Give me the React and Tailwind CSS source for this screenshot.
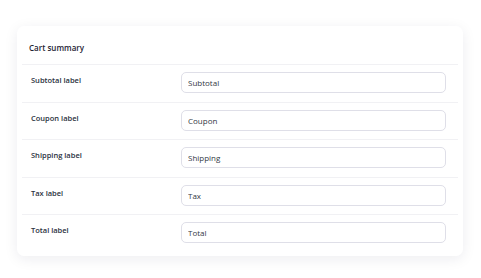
const rows = [
	{ label: 'Subtotal label', value: 'Subtotal' },
	{ label: 'Coupon label', value: 'Coupon' },
	{ label: 'Shipping label', value: 'Shipping' },
	{ label: 'Tax label', value: 'Tax' },
	{ label: 'Total label', value: 'Total' },
];

export default function App() {
	return (
		<div
			className="min-h-[278px] bg-white pt-[26px] pl-[17px]"
			style={{ fontFamily: '"Open Sans", "Noto Sans", sans-serif' }}
		>
			<div className="w-[446px] rounded-[7px] bg-white px-[5px] pb-[4px] shadow-[0_3px_14px_rgba(30,30,60,0.08)]">
				{/* Header */}
				<div className="flex h-[38px] items-center pt-[6px] pl-[7px] text-[8px] font-semibold text-[#1e2433]">
					Cart summary
				</div>

				{rows.map((row) => (
					<div
						key={row.label}
						className="flex border-t border-[#f1f1f4] pt-[7px] pb-[8.5px]"
					>
						<div className="w-[159px] pl-[9px] pt-[2px] text-[7.5px] font-semibold leading-[12px] text-[#2a3140]">
							{row.label}
						</div>
						<input
							readOnly
							value={row.value}
							className="h-[21px] w-[265px] rounded-[5px] border border-[#dfdfe8] bg-white px-[6px] text-[8px] text-[#333844] outline-none"
						/>
					</div>
				))}
			</div>
		</div>
	);
}
